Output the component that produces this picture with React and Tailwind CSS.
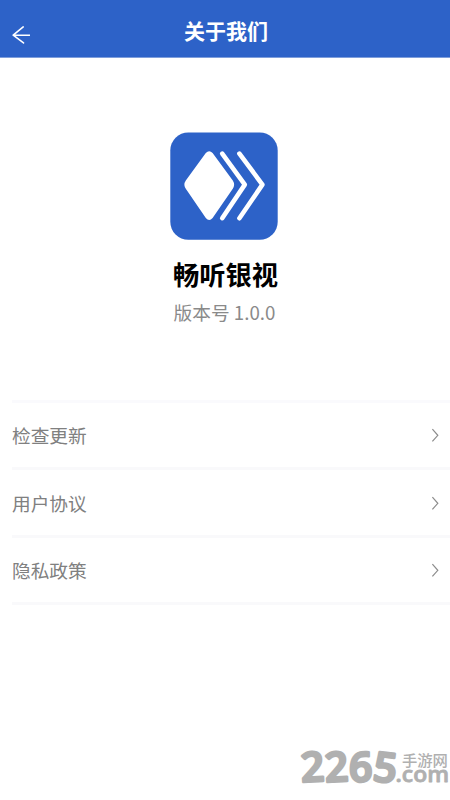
import React from 'react';

const MENU_ITEMS = [
  { id: 'update', label: '检查更新' },
  { id: 'agreement', label: '用户协议' },
  { id: 'privacy', label: '隐私政策' },
];

function BackIcon() {
  return (
    <svg
      className="h-[18px] w-[18px]"
      viewBox="0 0 18 18"
      fill="none"
      stroke="currentColor"
      strokeWidth="1.6"
      strokeLinecap="round"
      strokeLinejoin="round"
    >
      <path d="M11.2.9 1.2 9.2l10.3 7.7M1.2 9.2h16.2" />
    </svg>
  );
}

function ChevronIcon() {
  return (
    <svg className="h-[14px] w-2" viewBox="0 0 8 14" fill="none" stroke="#8c8c8c" strokeWidth="1.2">
      <path d="M1.4 1.2 6.8 7.3l-5.4 6.1" />
    </svg>
  );
}

function AppLogo() {
  return (
    <svg className="h-[108px] w-[108px]" viewBox="0 0 108 108" fill="none">
      <rect x=".3" y=".4" width="107.4" height="107.4" rx="18" fill="#2d62c8" />
      <path
        d="M35.8 21 15.8 48.5Q13 52.6 15.8 56.7L35.8 86.1Q39.2 90 42.6 86.1L62.8 56.7Q65.4 52.6 62.8 48.5L42.6 21Q39.2 17.4 35.8 21Z"
        fill="#fff"
      />
      <g stroke="#fff" strokeWidth="4.6" strokeLinecap="round" strokeLinejoin="round">
        <path d="M52.2 21.6 74.8 52.6 52.2 86.2" />
        <path d="M69.4 21.6 92.4 52.6 69.4 86.2" />
      </g>
    </svg>
  );
}

function SiteMark() {
  return (
    <svg
      className="absolute right-0 bottom-0 h-20 w-[160px]"
      viewBox="0 0 160 80"
      fill="#b0b0b0"
      stroke="#b0b0b0"
      strokeLinejoin="round"
    >
      <text
        x="11.5 35.5 59 82"
        y="62 62 61.5 60.5"
        rotate="-3 -3 0 7"
        fontSize="41"
        fontFamily="'Open Sans', sans-serif"
        fontWeight="600"
        strokeWidth="2.6"
      >
        2265
      </text>
      <text
        x="105.5"
        y="61.5"
        fontSize="22"
        textLength="53.5"
        lengthAdjust="spacingAndGlyphs"
        fontFamily="'Open Sans', sans-serif"
        fontWeight="600"
        strokeWidth=".8"
      >
        .com
      </text>
      <text x="112" y="46" fontSize="15.3" fontFamily="'Noto Sans CJK SC', sans-serif" fontWeight="500" stroke="none">
        手游网
      </text>
    </svg>
  );
}

export default function App() {
  return (
    <div className="relative flex h-[800px] w-[450px] flex-col overflow-hidden bg-white font-['Noto_Sans_CJK_SC',sans-serif]">
      <header className="grid h-[58px] shrink-0 grid-cols-[1fr_auto_1fr] border-b border-[#7f9edb] bg-[#2d62c8] pt-[5px] pl-0.5 text-white">
        <button className="mt-[21px] ml-2.5 h-[18px] w-[18px]" aria-label="返回">
          <BackIcon />
        </button>
        <h1 className="text-[21px] leading-[50px] font-bold">关于我们</h1>
      </header>

      <section className="flex flex-col items-center pt-[74px] pr-[2px]">
        <AppLogo />
        <h2 className="mt-4 pl-[3px] text-[26.3px] leading-9 font-bold text-black">畅听银视</h2>
        <p className="mt-1.5 pl-px text-[18.7px] leading-7 text-[#8a8a8a]">版本号 1.0.0</p>
      </section>

      <ul className="mt-[74px] ml-3 border-t-[3px] border-[#fafafd]">
        {MENU_ITEMS.map((item) => (
          <li
            key={item.id}
            className="flex h-[67.4px] items-center justify-between border-b-[3px] border-[#f9f9fb] pr-[11px]"
          >
            <span className="text-[18.7px] text-[#808080]">{item.label}</span>
            <ChevronIcon />
          </li>
        ))}
      </ul>

      <SiteMark />
    </div>
  );
}
